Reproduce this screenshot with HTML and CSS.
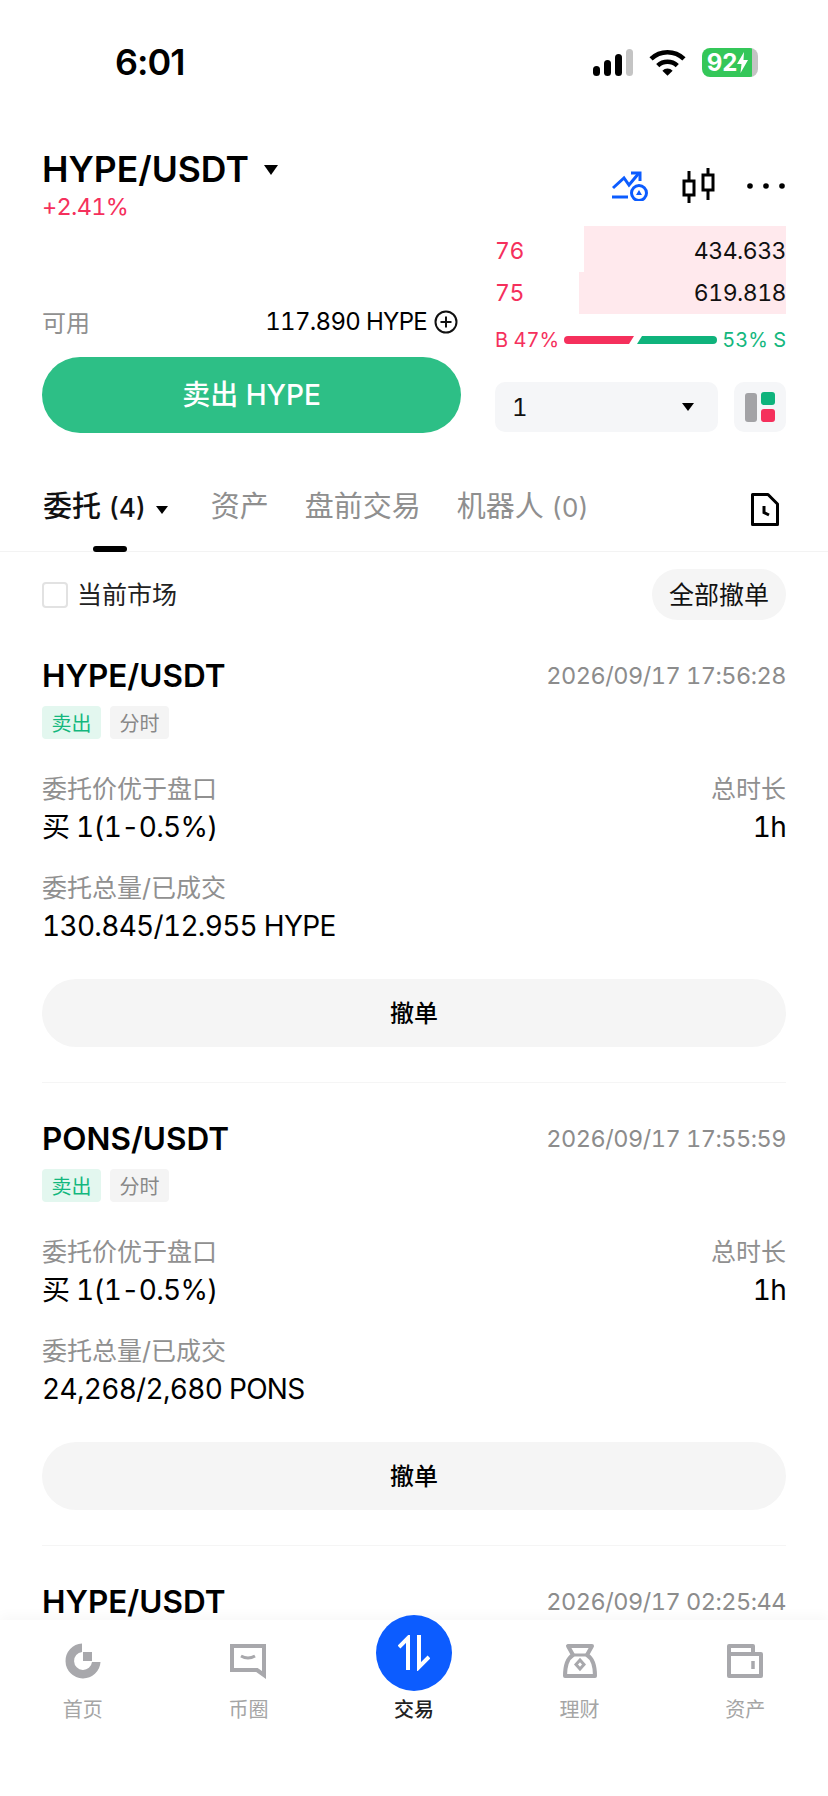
FILE: index.html

```html
<!DOCTYPE html>
<html lang="zh-CN">
<head>
  <meta charset="UTF-8" />
  <meta name="viewport" content="width=device-width, initial-scale=1.0" />
  <title>HYPE/USDT</title>
  <link rel="stylesheet" href="styles.css">
</head>
<body>
  <div class="screen">
    <div class="status">
      <span class="clock">6:01</span>
      <div class="status-icons">
        <svg class="signal" width="40" height="27" viewBox="0 0 40 27">
          <rect x="0" y="17" width="7" height="10" rx="3.5" fill="#000"/>
          <rect x="11" y="11" width="7" height="16" rx="3.5" fill="#000"/>
          <rect x="22" y="5" width="7" height="22" rx="3.5" fill="#000"/>
          <rect x="33" y="0" width="7" height="27" rx="3.5" fill="#c4c4c4"/>
        </svg>
        <svg class="wifi" width="37" height="27" viewBox="0 0 36 26">
          <path d="M2 9.5A23 23 0 0 1 34 9.5" fill="none" stroke="#000" stroke-width="4.5"/>
          <path d="M8.5 16A14 14 0 0 1 27.500 16" fill="none" stroke="#000" stroke-width="4.500"/>
          <path d="M13 21A7 7 0 0 1 23 21L18 26Z" fill="#000"/>
        </svg>
        <div class="battery">
          <span>92</span>
          <svg width="11" height="21" viewBox="0 0 11 21"><path d="M7 0L0 12H4.500L3.500 21L11 8H6.500Z" fill="#fff"/></svg>
        </div>
      </div>
    </div>

    <div class="head">
      <div>
        <div class="pair">HYPE/USDT <span class="caret caret-big"></span></div>
        <div class="change">+2.41%</div>
      </div>
      <div class="tools">
        <svg width="38" height="30" viewBox="0 0 38 30" fill="none">
          <path d="M2 17L13 7L18 14L28 2" stroke="#0c5cff" stroke-width="3"/>
          <path d="M20 2H29V10" stroke="#0c5cff" stroke-width="3"/>
          <path d="M1 26H17" stroke="#0c5cff" stroke-width="3"/>
          <circle cx="28" cy="22" r="7.500" stroke="#0c5cff" stroke-width="3"/>
          <path d="M28 19L31 24H25Z" fill="#0c5cff"/>
        </svg>
        <svg width="34" height="36" viewBox="0 0 34 36" fill="none" stroke="#000" stroke-width="3">
          <rect x="3" y="13" width="10" height="14"/>
          <path d="M8 3V13M8 27V35"/>
          <rect x="22" y="7" width="10" height="15"/>
          <path d="M27 0V7M27 22V32"/>
        </svg>
        <svg width="38" height="6" viewBox="0 0 38 6" fill="#000">
          <circle cx="3" cy="3" r="2.800"/>
          <circle cx="19" cy="3" r="2.800"/>
          <circle cx="35" cy="3" r="2.800"/>
        </svg>
      </div>
    </div>

    <div class="trade">
      <div class="trade-left">
        <div class="avail">
          <span class="muted">可用</span>
          <span class="avail-val">117.890 HYPE
            <svg width="24" height="24" viewBox="0 0 24 24" fill="none" stroke="#111" stroke-width="2">
              <circle cx="12" cy="12" r="10.500"/>
              <path d="M12 6.500V17.500M6.500 12H17.500"/>
            </svg>
          </span>
        </div>
        <div class="sell-btn">卖出 HYPE</div>
      </div>
      <div class="trade-right">
        <div class="book">
          <div class="book-row row-a">
            <div class="depth" style="width: 69.4%"></div>
            <span class="red">76</span>
            <span class="qty">434.633</span>
          </div>
          <div class="book-row row-b">
            <div class="depth" style="width: 71.1%"></div>
            <span class="red">75</span>
            <span class="qty">619.818</span>
          </div>
        </div>
        <div class="ratio">
          <span class="red">B 47%</span>
          <svg width="153" height="8" viewBox="0 0 153 8">
            <path d="M4 0H70L65 8H4A4 4 0 0 1 4 0Z" fill="#f5305c"/>
            <path d="M78 0H149A4 4 0 0 1 149 8H73Z" fill="#0fb37c"/>
          </svg>
          <span class="green">53% S</span>
        </div>
        <div class="controls">
          <div class="select"><span>1</span><span class="caret"></span></div>
          <div class="layout-btn">
            <span class="lay-grey"></span>
            <span class="lay-col">
              <span class="lay-green"></span>
              <span class="lay-red"></span>
            </span>
          </div>
        </div>
      </div>
    </div>

    <div class="tabs">
      <div class="tab tab-on">委托 <small>(4)</small> <span class="caret"></span></div>
      <div class="tab">资产</div>
      <div class="tab">盘前交易</div>
      <div class="tab">机器人 <small>(0)</small></div>
      <svg class="doc" width="28" height="33" viewBox="0 0 28 33" fill="none" stroke="#000" stroke-width="3">
        <path d="M1.500 1.500H17L26.500 11V31.500H1.500Z" stroke-linejoin="round"/>
        <path d="M13 13V19.500L18 22"/>
      </svg>
    </div>

    <div class="orders">
      <div class="filter">
        <label class="check"><span class="box"></span><span class="check-text">当前市场</span></label>
        <div class="cancel-all">全部撤单</div>
      </div>

      <div class="card">
        <div class="card-top"><span class="sym">HYPE/USDT</span><span class="time">2026/09/17 17:56:28</span></div>
        <div class="tags"><span class="tag tag-sell">卖出</span><span class="tag">分时</span></div>
        <div class="line line-first"><span class="muted">委托价优于盘口</span><span class="muted">总时长</span></div>
        <div class="val"><span>买 1(1-0.5%)</span><span>1h</span></div>
        <div class="line line-second"><span class="muted">委托总量/已成交</span></div>
        <div class="val"><span>130.845/12.955 HYPE</span></div>
        <div class="cancel">撤单</div>
      </div>

      <div class="card">
        <div class="card-top"><span class="sym">PONS/USDT</span><span class="time">2026/09/17 17:55:59</span></div>
        <div class="tags"><span class="tag tag-sell">卖出</span><span class="tag">分时</span></div>
        <div class="line line-first"><span class="muted">委托价优于盘口</span><span class="muted">总时长</span></div>
        <div class="val"><span>买 1(1-0.5%)</span><span>1h</span></div>
        <div class="line line-second"><span class="muted">委托总量/已成交</span></div>
        <div class="val"><span>24,268/2,680 PONS</span></div>
        <div class="cancel">撤单</div>
      </div>

      <div class="card">
        <div class="card-top"><span class="sym">HYPE/USDT</span><span class="time">2026/09/17 02:25:44</span></div>
      </div>
    </div>

    <div class="nav">
      <div class="nav-item">
        <svg width="36" height="36" viewBox="0 0 36 36" fill="#a8a8ac">
          <path d="M17 0.500A17.500 17.500 0 1 0 35.500 19H27A9 9 0 1 1 17 9Z"/>
          <rect x="18" y="9" width="9" height="9"/>
        </svg>
        <span>首页</span>
      </div>
      <div class="nav-item">
        <svg width="36" height="36" viewBox="0 0 36 36" fill="none" stroke="#a8a8ac" stroke-width="4">
          <path d="M2 3H34V32L27 27H2Z"/>
          <path d="M11 13Q18 17 25 13" stroke-width="3"/>
        </svg>
        <span>币圈</span>
      </div>
      <div class="nav-item nav-on">
        <div class="trade-btn">
          <svg width="32" height="36" viewBox="0 0 32 36" fill="none" stroke="#fff" stroke-width="4">
            <path d="M1 12L10 3V35"/>
            <path d="M21 0V32L31 22"/>
          </svg>
        </div>
        <div class="nav-gap"></div>
        <span>交易</span>
      </div>
      <div class="nav-item">
        <svg width="36" height="36" viewBox="0 0 36 36" fill="none" stroke="#a8a8ac" stroke-width="4">
          <path d="M6 3H30L25 12C30 15 33 20 33 33H3C3 20 6 15 11 12Z" stroke-linejoin="round"/>
          <path d="M11 12H25" stroke-width="3"/>
          <path d="M18 17L22 21.500L18 26L14 21.500Z" stroke-width="3"/>
        </svg>
        <span>理财</span>
      </div>
      <div class="nav-item">
        <svg width="36" height="36" viewBox="0 0 36 36" fill="none" stroke="#a8a8ac" stroke-width="4">
          <path d="M2 33V3H26V11H34V33Z" stroke-linejoin="round"/>
          <path d="M2 11H26"/>
          <path d="M26 18V26" stroke-width="3.500"/>
        </svg>
        <span>资产</span>
      </div>
    </div>
  </div>
</body>
</html>
```

FILE: styles.css

```css
* {
  box-sizing: border-box;
}
body {
  margin: 0;
  background: #fff;
  color: #111;
  font-family: Inter, "Noto Sans CJK SC", sans-serif;
  font-size: 24px;
  font-variant-numeric: tabular-nums;
}
.screen {
  width: 828px;
  height: 1796px;
  display: flex;
  flex-direction: column;
  overflow: hidden;
}
.muted {
  color: #909090;
}
.red {
  color: #f5305c;
}
.green {
  color: #14b77e;
}
.caret {
  display: inline-block;
  width: 0;
  height: 0;
  border-left: 6px solid transparent;
  border-right: 6px solid transparent;
  border-top: 8px solid #000;
}

/* status bar */
.status {
  height: 148px;
  flex: none;
  padding: 47px 70px 0 115px;
  display: flex;
  justify-content: space-between;
  align-items: flex-start;
}
.clock {
  font-size: 36px;
  font-weight: 600;
  line-height: 30px;
  letter-spacing: -1px;
  color: #000;
  font-variant-numeric: normal;
}
.status-icons {
  display: flex;
  align-items: center;
  gap: 16px;
  margin-top: 1px;
}
.battery {
  width: 56px;
  height: 29px;
  border-radius: 8px;
  background: linear-gradient(90deg, #34c759 0, #34c759 90%, #c4c4c4 90%, #c4c4c4 100%);
  display: flex;
  align-items: center;
  justify-content: center;
  color: #fff;
  font-size: 24px;
  font-weight: 700;
  padding-right: 5px;
  font-variant-numeric: normal;
}

/* pair header */
.head {
  height: 78px;
  flex: none;
  padding: 0 43px 0 42px;
  display: flex;
  justify-content: space-between;
}
.pair {
  font-size: 35.500px;
  font-weight: 600;
  line-height: 44px;
  color: #000;
  white-space: nowrap;
}
.caret-big {
  border-left-width: 7px;
  border-right-width: 7px;
  border-top-width: 10px;
  margin-left: 6px;
  vertical-align: 7px;
}
.change {
  color: #f5305c;
  font-size: 23.500px;
  line-height: 30px;
  letter-spacing: -0.7px;
}
.tools {
  display: flex;
  align-items: center;
  gap: 32px;
  height: 36px;
  margin-top: 20px;
}

/* trade panel */
.trade {
  height: 207px;
  flex: none;
  padding: 0 42px;
  display: grid;
  grid-template-columns: 419px 291px;
  column-gap: 34px;
}
.trade-left {
  display: flex;
  flex-direction: column;
  justify-content: flex-end;
}
.avail {
  height: 30px;
  margin-bottom: 19px;
  display: flex;
  justify-content: space-between;
  align-items: center;
  font-size: 24px;
}
.avail span {
  margin-top: -3px;
}
.avail-val {
  display: flex;
  align-items: center;
  gap: 7px;
  margin-right: 3px;
  color: #000;
  letter-spacing: -0.7px;
}
.sell-btn {
  height: 76px;
  padding-bottom: 4px;
  border-radius: 38px;
  background: #2dbf86;
  color: #fff;
  font-size: 28px;
  font-weight: 500;
  display: flex;
  align-items: center;
  justify-content: center;
}
.book-row {
  position: relative;
  display: flex;
  justify-content: space-between;
  align-items: center;
  font-size: 23px;
  letter-spacing: -0.5px;
}
.book-row span {
  position: relative;
}
.row-a {
  height: 46px;
  padding-top: 4px;
}
.row-b {
  height: 42px;
}
.depth {
  position: absolute;
  top: 0;
  right: 0;
  bottom: 0;
  background: #ffe9ed;
}
.ratio {
  height: 24px;
  margin-top: 14px;
  display: flex;
  align-items: center;
  justify-content: space-between;
  font-size: 20px;
  white-space: nowrap;
}
.controls {
  margin-top: 30px;
  display: flex;
  justify-content: space-between;
}
.select {
  width: 223px;
  height: 50px;
  border-radius: 10px;
  background: #f5f6f8;
  padding: 0 24px 0 17px;
  display: flex;
  align-items: center;
  justify-content: space-between;
}
.layout-btn {
  width: 52px;
  height: 50px;
  border-radius: 10px;
  background: #f5f6f8;
  display: flex;
  align-items: center;
  justify-content: center;
  gap: 4px;
}
.lay-grey {
  width: 12px;
  height: 29px;
  border-radius: 3px;
  background: #a3a3a6;
}
.lay-col {
  display: flex;
  flex-direction: column;
  gap: 4px;
}
.lay-green,
.lay-red {
  width: 14px;
  height: 13px;
  border-radius: 3px;
}
.lay-green {
  background: #0fb37c;
}
.lay-red {
  background: #f5305c;
}

/* tabs */
.tabs {
  height: 119px;
  flex: none;
  position: relative;
  padding: 55px 49px 0 43px;
  border-bottom: 1px solid #f3f3f3;
  display: flex;
  align-items: flex-start;
  gap: 36px;
}
.tab {
  position: relative;
  height: 64px;
  line-height: 38px;
  font-size: 29px;
  color: #8f8f8f;
  white-space: nowrap;
}
.tab small {
  font-size: 26px;
}
.tab-on {
  color: #111;
  font-weight: 500;
  margin-right: 7px;
}
.tab-on .caret {
  vertical-align: 3px;
  margin-left: 2px;
}
.tab-on::after {
  content: "";
  position: absolute;
  left: 50px;
  bottom: 0;
  width: 34px;
  height: 6px;
  border-radius: 3px;
  background: #000;
}
.doc {
  margin-left: auto;
  margin-top: 5px;
}

/* orders */
.orders {
  flex: 1;
  min-height: 0;
  overflow: hidden;
  padding: 17px 42px 0;
}
.filter {
  height: 51px;
  display: flex;
  justify-content: space-between;
  align-items: center;
}
.check {
  display: flex;
  align-items: center;
  gap: 9px;
  font-size: 25px;
  color: #222;
}
.check-text {
  margin-top: -4px;
}
.box {
  width: 26px;
  height: 26px;
  border: 2px solid #e2e2e2;
  border-radius: 4px;
}
.cancel-all {
  width: 134px;
  height: 51px;
  padding-bottom: 4px;
  border-radius: 26px;
  background: #f5f5f5;
  font-size: 25px;
  display: flex;
  align-items: center;
  justify-content: center;
}
.card {
  height: 463px;
  padding-top: 35px;
  border-bottom: 1px solid #f5f5f5;
}
.card-top {
  height: 40px;
  display: flex;
  justify-content: space-between;
  align-items: center;
}
.sym {
  font-size: 31.500px;
  font-weight: 600;
  color: #000;
}
.time {
  color: #8c8c8c;
  font-size: 23.500px;
  letter-spacing: -0.5px;
}
.tags {
  margin-top: 11px;
  display: flex;
  gap: 9px;
}
.tag {
  width: 59px;
  height: 33px;
  border-radius: 4px;
  background: #f4f4f4;
  color: #888;
  font-size: 20px;
  display: flex;
  align-items: center;
  justify-content: center;
}
.tag-sell {
  background: #e3f7ef;
  color: #14b77e;
}
.line {
  height: 32px;
  line-height: 32px;
  font-size: 25px;
  display: flex;
  justify-content: space-between;
}
.line-first {
  margin-top: 34px;
}
.line-second {
  margin-top: 28px;
}
.val {
  height: 34px;
  line-height: 34px;
  margin-top: 5px;
  font-size: 28px;
  letter-spacing: -0.7px;
  color: #000;
  display: flex;
  justify-content: space-between;
}
.cancel {
  height: 68px;
  margin-top: 36px;
  padding-bottom: 4px;
  border-radius: 34px;
  background: #f5f5f5;
  font-size: 24px;
  font-weight: 500;
  color: #000;
  display: flex;
  align-items: center;
  justify-content: center;
}

/* bottom nav */
.nav {
  height: 176px;
  flex: none;
  position: relative;
  background: #fff;
  box-shadow: 0 -4px 12px rgba(0, 0, 0, 0.03);
  display: grid;
  grid-template-columns: repeat(5, 1fr);
  padding-top: 23px;
}
.nav-item {
  display: flex;
  flex-direction: column;
  align-items: center;
  gap: 18px;
  color: #a5a5a5;
  font-size: 20px;
  line-height: 26px;
}
.nav-gap {
  height: 36px;
}
.nav-on {
  color: #222;
  font-weight: 500;
}
.trade-btn {
  position: absolute;
  top: -5px;
  left: 376px;
  width: 76px;
  height: 76px;
  border-radius: 50%;
  background: #0c5cff;
  display: flex;
  align-items: center;
  justify-content: center;
}
```
